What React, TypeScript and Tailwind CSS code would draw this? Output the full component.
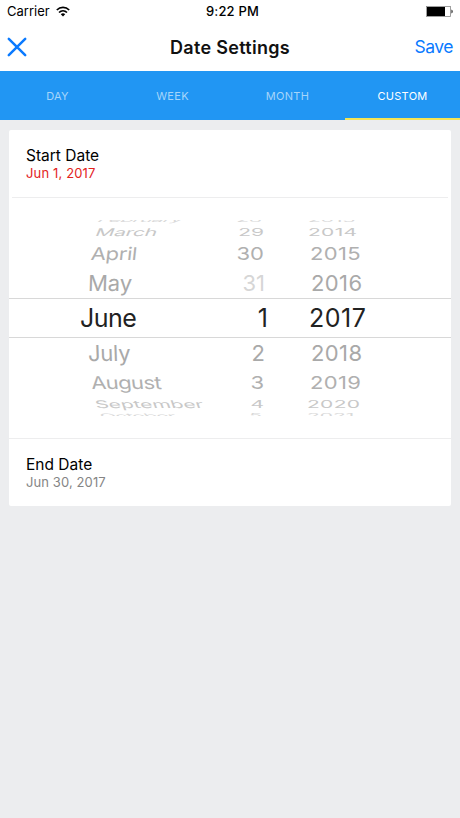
import { useState } from 'react';

const TABS = ['DAY', 'WEEK', 'MONTH', 'CUSTOM'] as const;

interface WheelRow {
  month: string;
  day: string;
  year: string;
  // classes for the row box, each column's inset and the drum perspective
  row: string;
  monthCell: string;
  dayCell: string;
  yearCell: string;
}

const WHEEL_ROWS: WheelRow[] = [
  {
    month: 'February', day: '28', year: '2013',
    row: 'h-[4px] text-[21px] text-[#d9d9d9]',
    monthCell: 'pl-[90px] -translate-y-[2px] -skew-x-[20deg] scale-y-[0.3] tracking-[-0.6px]',
    dayCell: 'pr-[6px] -translate-y-[2px] scale-y-[0.3]',
    yearCell: 'pl-[40px] -translate-y-[2px] scale-y-[0.3]',
  },
  {
    month: 'March', day: '29', year: '2014',
    row: 'h-[16px] text-[21px] text-[#c8c8c8]',
    monthCell: 'pl-[87px] -skew-x-[12deg] scale-y-[0.5] tracking-[-0.3px]',
    dayCell: 'pr-[4px] scale-y-[0.5]',
    yearCell: 'pl-[40px] scale-y-[0.5] tracking-[0.3px]',
  },
  {
    month: 'April', day: '30', year: '2015',
    row: 'h-[28px] text-[22px] text-[#b0b0b0]',
    monthCell: 'pl-[82px] -skew-x-[5deg] scale-y-[0.8] tracking-[-0.4px]',
    dayCell: 'pr-[4px] scale-y-[0.8]',
    yearCell: 'pl-[42px] scale-y-[0.8] tracking-[0.3px]',
  },
  {
    month: 'May', day: '31', year: '2016',
    row: 'h-[30px] text-[22px] text-[#a9a9a9]',
    monthCell: 'pl-[79px] -skew-x-[2deg]',
    dayCell: 'pr-[3px] text-[#d6d6d6]',
    yearCell: 'pl-[43px] tracking-[0.4px]',
  },
  {
    month: 'June', day: '1', year: '2017',
    row: 'h-[40px] border-y border-[#d8d8d8] pt-px text-[25px] text-[#222]',
    monthCell: 'pl-[71px] tracking-[-0.5px]',
    dayCell: 'pr-0',
    yearCell: 'pl-[41px] tracking-[0.5px]',
  },
  {
    month: 'July', day: '2', year: '2018',
    row: 'h-[30px] text-[22px] text-[#a9a9a9]',
    monthCell: 'pl-[79px] skew-x-[2deg] tracking-[-0.3px]',
    dayCell: 'pr-[3px]',
    yearCell: 'pl-[43px] tracking-[0.4px]',
  },
  {
    month: 'August', day: '3', year: '2019',
    row: 'h-[29px] pt-px text-[22px] text-[#b0b0b0]',
    monthCell: 'pl-[82px] skew-x-[5deg] scale-y-[0.8] tracking-[-0.6px]',
    dayCell: 'pr-[4px] scale-y-[0.8]',
    yearCell: 'pl-[42px] scale-y-[0.8] tracking-[0.3px]',
  },
  {
    month: 'September', day: '4', year: '2020',
    row: 'h-[15px] text-[21px] text-[#c8c8c8]',
    monthCell: 'pl-[86px] skew-x-[10deg] scale-y-[0.5] tracking-[-0.1px]',
    dayCell: 'pr-[4px] scale-y-[0.5]',
    yearCell: 'pl-[39px] scale-y-[0.5] tracking-[0.3px]',
  },
  {
    month: 'October', day: '5', year: '2021',
    row: 'h-[4px] text-[21px] text-[#d9d9d9]',
    monthCell: 'pl-[91px] translate-y-[2px] skew-x-[16deg] scale-y-[0.3] tracking-[-0.8px]',
    dayCell: 'pr-[6px] translate-y-[2px] scale-y-[0.3]',
    yearCell: 'pl-[39px] translate-y-[2px] scale-y-[0.3]',
  },
];

function StatusBar() {
  return (
    <div className="grid h-6 grid-cols-3 items-center pl-[7px] pr-[7px] text-[13px] text-black">
      <div className="flex items-center gap-[6px]">
        <span>Carrier</span>
        <svg className="mb-px" width="14" height="11" viewBox="0 0 14 11" fill="none" stroke="#000" strokeWidth="1.7">
          <path d="M0.8 4C4.3 0.6 9.7 0.6 13.2 4" />
          <path d="M3 6.5C5.3 4.3 8.7 4.3 11 6.5" />
          <path d="M7 10.5L4.8 8.2C6 7 8 7 9.2 8.2Z" fill="#000" stroke="none" />
        </svg>
      </div>
      <span className="pl-[5px] text-center font-medium tracking-[0.2px]">9:22 PM</span>
      <svg className="mb-px justify-self-end" width="27" height="11" viewBox="0 0 27 11">
        <rect x="0.5" y="0.5" width="24" height="10" fill="#fff" stroke="#888" strokeWidth="0.8" />
        <rect x="1" y="1" width="18" height="9" fill="#000" />
        <path d="M25.5 3.5C27 4 27 7 25.5 7.5Z" fill="#000" />
      </svg>
    </div>
  );
}

function Header() {
  return (
    <div className="grid h-[47px] grid-cols-3 items-center pb-px pl-[7px] pr-[7px]">
      <button aria-label="Close" className="w-5">
        <svg width="20" height="20" viewBox="0 0 20 20" stroke="#0a7aff" strokeWidth="2.5" strokeLinecap="round">
          <path d="M1.8 1.8L18.2 18.2M18.2 1.8L1.8 18.2" />
        </svg>
      </button>
      <h1 className="whitespace-nowrap text-center text-[18px] font-semibold tracking-[0.3px] text-[#111]">Date Settings</h1>
      <button className="justify-self-end text-[17.5px] tracking-[-0.5px] text-[#0a7aff]">Save</button>
    </div>
  );
}

function DateWheel() {
  return (
    <div className="flex h-[240px] flex-col justify-center pb-px">
      <div className="overflow-hidden">
        {WHEEL_ROWS.map((r) => (
          <div key={r.month} className={`grid grid-cols-[190px_69px_183px] items-center whitespace-nowrap leading-none ${r.row}`}>
            <div className={`flex h-0 items-center ${r.monthCell}`}>{r.month}</div>
            <div className={`flex h-0 items-center justify-end ${r.dayCell}`}>{r.day}</div>
            <div className={`flex h-0 items-center ${r.yearCell}`}>{r.year}</div>
          </div>
        ))}
      </div>
    </div>
  );
}

export default function App() {
  const [tab, setTab] = useState<string>('CUSTOM');

  return (
    <div className="flex h-[818px] w-[460px] flex-col overflow-hidden bg-[#ecedef] font-['Inter',sans-serif]">
      <div className="bg-white">
        <StatusBar />
        <Header />
      </div>

      <div className="grid h-[49px] grid-cols-4 bg-[#2196f3]">
        {TABS.map((t) => (
          <button
            key={t}
            onClick={() => setTab(t)}
            className={`border-b-2 pt-[3px] text-[11px] tracking-[0.3px] ${
              t === tab ? 'border-[#f4e456] text-white' : 'border-transparent text-[#a6d5fa]'
            }`}
          >
            {t}
          </button>
        ))}
      </div>

      <div className="mx-[9px] mt-[10px] h-[376px] rounded-[2px] bg-white">
        <div className="flex h-[67px] flex-col pl-[17px] pt-4">
          <span className="text-[15.5px] leading-[19px] text-black">Start Date</span>
          <span className="text-[13px] leading-[16px] tracking-[0.15px] text-[#e3231d]">Jun 1, 2017</span>
        </div>
        <div className="mx-[3px] h-px bg-[#ededee]" />
        <DateWheel />
        <div className="h-px bg-[#ededee]" />
        <div className="flex flex-col pl-[17px] pt-4">
          <span className="text-[15.5px] leading-[19px] text-black">End Date</span>
          <span className="text-[13px] leading-[16px] tracking-[0.1px] text-[#858585]">Jun 30, 2017</span>
        </div>
      </div>
    </div>
  );
}
